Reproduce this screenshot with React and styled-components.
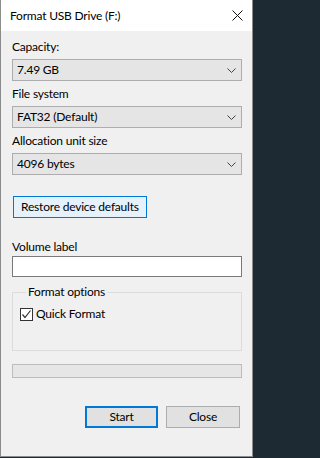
import React from "react";
import styled, { createGlobalStyle } from "styled-components";

const GlobalStyle = createGlobalStyle`
  html, body {
    margin: 0;
    padding: 0;
    background: #1e2a33;
  }
  body {
    font-family: "Segoe UI", Lato, "Noto Sans", sans-serif;
    font-size: 12px;
    letter-spacing: -0.2px;
    color: #000;
  }
`;

const Window = styled.div`
  width: 253px;
  height: 457px;
  box-sizing: border-box;
  background: #f0f0f0;
  border: 1px solid #8c8c8c;
  border-top: none;
  display: flex;
  flex-direction: column;
`;

const TitleBar = styled.div`
  height: 31px;
  flex: none;
  background: #fff;
  display: flex;
  align-items: center;
  justify-content: space-between;
  padding: 0 9px 0 9px;
`;

const Title = styled.span`
  font-size: 12px;
  line-height: 16px;
  margin-top: 1px;
`;

const Body = styled.div`
  display: flex;
  flex-direction: column;
  padding: 8px 10px 0 11px;
`;

const Label = styled.div`
  line-height: 16px;
  height: 16px;
  margin-top: ${(p) => p.$top || 0}px;
`;

const Select = styled.div`
  margin-top: 4px;
  height: 22px;
  box-sizing: border-box;
  background: #e5e5e5;
  border: 1px solid #adadad;
  display: flex;
  align-items: center;
  justify-content: space-between;
  padding: 0 5px 0 4px;
  line-height: 16px;
`;

const Button = styled.div`
  height: 22px;
  box-sizing: border-box;
  background: ${(p) => (p.$light ? "#e5f1fb" : "#e1e1e1")};
  border: ${(p) => (p.$focus ? "2px solid #0078d7" : p.$light ? "1px solid #0078d7" : "1px solid #adadad")};
  display: flex;
  align-items: center;
  justify-content: center;
  line-height: 16px;
  width: ${(p) => (p.$width ? `${p.$width}px` : "auto")};
  padding: 0 ${(p) => (p.$width ? 0 : 7)}px;
`;

const RestoreRow = styled.div`
  margin-top: 21px;
  display: flex;
  padding-left: 1px;
`;

const TextInput = styled.div`
  margin-top: 1px;
  height: 21px;
  box-sizing: border-box;
  background: #fff;
  border: 1px solid #7a7a7a;
`;

const Group = styled.fieldset`
  margin: 7px 0 0 0;
  padding: 6px 0 0 7px;
  height: 67px;
  box-sizing: border-box;
  border: 1px solid #dcdcdc;
  min-width: 0;
`;

const Legend = styled.legend`
  padding: 0 2px;
  margin-left: 6px;
  line-height: 16px;
`;

const CheckRow = styled.label`
  display: flex;
  align-items: center;
  gap: 3px;
  line-height: 16px;
`;

const Box = styled.span`
  width: 13px;
  height: 13px;
  box-sizing: border-box;
  border: 1px solid #333;
  background: #fff;
  display: flex;
  align-items: center;
  justify-content: center;
`;

const Progress = styled.div`
  margin-top: 13px;
  height: 14px;
  box-sizing: border-box;
  background: #e6e6e6;
  border: 1px solid #bcbcbc;
`;

const Footer = styled.div`
  margin-top: 28px;
  display: flex;
  justify-content: flex-end;
  gap: 8px;
  padding-right: 2px;
`;

const Chevron = () => (
  <svg width="9" height="5" viewBox="0 0 9 5">
    <path d="M0.5 0.5 L4.5 4.5 L8.5 0.5" fill="none" stroke="#444" strokeWidth="1" />
  </svg>
);

const CloseIcon = () => (
  <svg width="11" height="11" viewBox="0 0 11 11">
    <path d="M0.5 0.5 L10.5 10.5 M10.5 0.5 L0.5 10.5" stroke="#111" strokeWidth="1" />
  </svg>
);

const Check = () => (
  <svg width="11" height="11" viewBox="0 0 11 11">
    <path d="M1.5 5.5 L4 8.5 L9.5 1.5" fill="none" stroke="#333" strokeWidth="1.2" />
  </svg>
);

export default function App() {
  return (
    <>
      <GlobalStyle />
      <Window>
        <TitleBar>
          <Title>Format USB Drive (F:)</Title>
          <CloseIcon />
        </TitleBar>
        <Body>
          <Label>Capacity:</Label>
          <Select>
            <span>7.49 GB</span>
            <Chevron />
          </Select>
          <Label $top={5}>File system</Label>
          <Select>
            <span>FAT32 (Default)</span>
            <Chevron />
          </Select>
          <Label $top={5}>Allocation unit size</Label>
          <Select>
            <span>4096 bytes</span>
            <Chevron />
          </Select>
          <RestoreRow>
            <Button $light>Restore device defaults</Button>
          </RestoreRow>
          <Label $top={21}>Volume label</Label>
          <TextInput />
          <Group>
            <Legend>Format options</Legend>
            <CheckRow>
              <Box>
                <Check />
              </Box>
              Quick Format
            </CheckRow>
          </Group>
          <Progress />
          <Footer>
            <Button $focus $width={73}>Start</Button>
            <Button $width={74}>Close</Button>
          </Footer>
        </Body>
      </Window>
    </>
  );
}
